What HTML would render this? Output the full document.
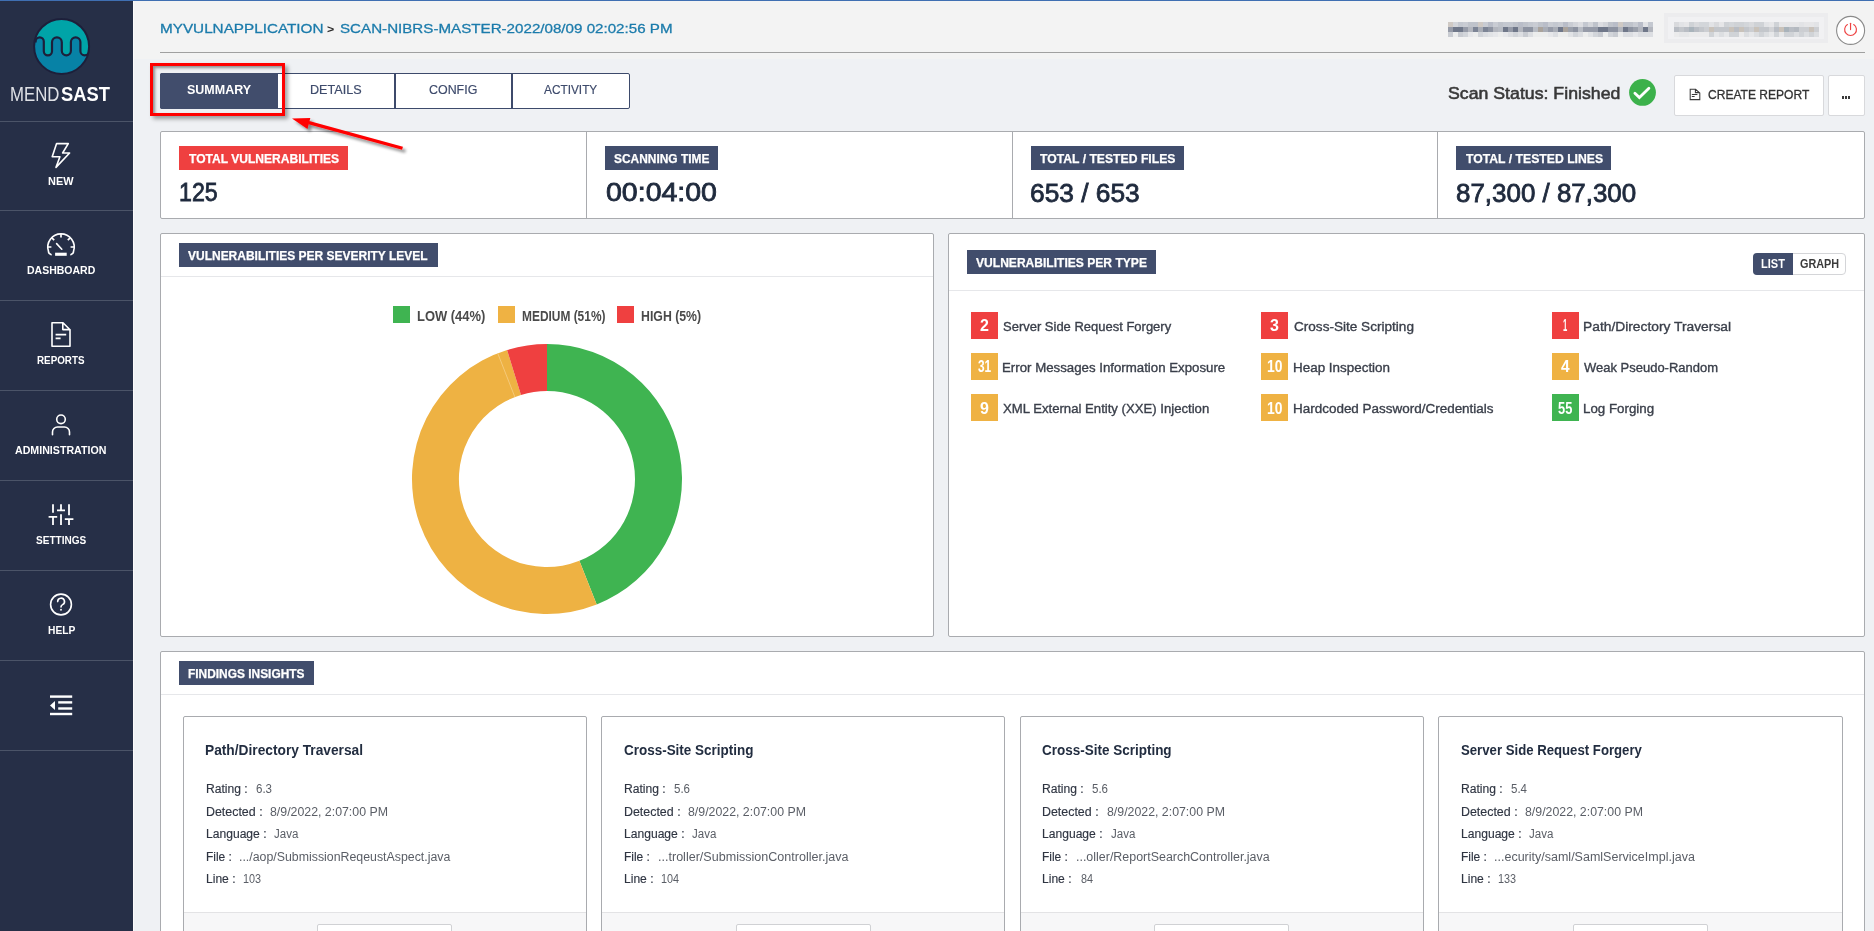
<!DOCTYPE html>
<html><head><meta charset="utf-8">
<style>
*{margin:0;padding:0;box-sizing:border-box}
html,body{width:1874px;height:931px;overflow:hidden;background:#eff1f4;font-family:"Liberation Sans",sans-serif}
.abs{position:absolute}
.t{position:absolute;white-space:nowrap;line-height:1;transform-origin:0 0}
.card{position:absolute;background:#fff;border:1px solid #a9abaf;border-radius:2px}
.sep{position:absolute;height:1px;background:#e6e7ea}
.lbl{position:absolute;height:24px;background:#414d6c}
.badge{position:absolute;width:27px;height:27px}
.sdiv{position:absolute;left:0;width:133px;height:1px;background:#4b5468}
</style></head><body>
<!-- top header bg -->
<div class="abs" style="left:133px;top:0;width:1741px;height:59px;background:#f3f3f3"></div>
<div class="abs" style="left:0;top:0;width:1874px;height:1px;background:#3f6fb2"></div>
<!-- sidebar -->
<div class="abs" style="left:0;top:1px;width:133px;height:930px;background:#262f47"></div>
<div class="abs" style="left:133px;top:1px;width:1px;height:930px;background:#fbfbfb"></div>
<div class="sdiv" style="top:121px"></div>
<div class="sdiv" style="top:210px"></div>
<div class="sdiv" style="top:300px"></div>
<div class="sdiv" style="top:390px"></div>
<div class="sdiv" style="top:480px"></div>
<div class="sdiv" style="top:570px"></div>
<div class="sdiv" style="top:660px"></div>
<div class="sdiv" style="top:750px"></div>

<svg class="abs" style="left:0;top:0" width="133" height="931" viewBox="0 0 133 931">
  <defs><clipPath id="lc"><circle cx="61.6" cy="46.4" r="27.6"/></clipPath></defs>
  <g clip-path="url(#lc)">
    <rect x="30" y="15" width="65" height="65" fill="#0782a6"/>
    <path d="M30 41.4 L35.6 41.4 A4.1 4.1 0 0 1 43.8 41.4 L43.8 51.2 A4.1 4.1 0 0 0 52 51.2 L52 42.2 A4.9 4.9 0 0 1 61.8 42.2 L61.8 50.75 A4.55 4.55 0 0 0 70.9 50.75 L70.9 42.05 A4.75 4.75 0 0 1 80.4 42.05 L80.4 51 A4.3 4.3 0 0 0 89 51 L95 51 L95 10 L30 10 Z" fill="#00a4a8"/>
    <path d="M30 41.4 L35.6 41.4 A4.1 4.1 0 0 1 43.8 41.4 L43.8 51.2 A4.1 4.1 0 0 0 52 51.2 L52 42.2 A4.9 4.9 0 0 1 61.8 42.2 L61.8 50.75 A4.55 4.55 0 0 0 70.9 50.75 L70.9 42.05 A4.75 4.75 0 0 1 80.4 42.05 L80.4 51 A4.3 4.3 0 0 0 89 51 L95 51" fill="none" stroke="#1d1f3a" stroke-width="2.2"/>
  </g>
  <circle cx="61.6" cy="46.4" r="27.5" fill="none" stroke="#1d1f3a" stroke-width="2"/>
  <g fill="none" stroke="#fff" stroke-width="1.6" stroke-linejoin="round" stroke-linecap="round">
    <!-- new -->
    <path d="M56.6 143.6 L68.3 143.6 L62.6 153 L69.6 153 L56 167.4 L59.9 156.8 L52.2 156.8 Z"/>
    <!-- dashboard -->
    <path d="M51 254.6 Q48.4 253.6 48.4 251 A13.2 13.2 0 1 1 73.6 251 Q73.6 253.6 71 254.6"/>
    <path d="M48.00 247.00 L51.40 247.00 M51.81 237.81 L54.21 240.21 M61.00 234.00 L61.00 237.40 M70.19 237.81 L67.79 240.21 M74.00 247.00 L70.60 247.00" stroke-width="1.7" stroke-linecap="butt"/>
    <path d="M56.6 243.6 L61.8 249.2" stroke-width="1.6"/>
    <!-- reports -->
    <path d="M52 322.8 L63 322.8 L70 329.8 L70 346.2 L52 346.2 Z M62.8 322.8 L62.8 329.6 L70 329.6"/>
    <path d="M55.6 334.6 L66.2 334.6 M55.6 338.4 L60.6 338.4" stroke-linecap="butt"/>
    <!-- admin -->
    <circle cx="61" cy="419.3" r="4.3"/>
    <path d="M52.5 434.8 L52.5 432 A5 5 0 0 1 57.5 427 L64.5 427 A5 5 0 0 1 69.5 432 L69.5 434.8"/>
    <!-- settings -->
    <path d="M53 504.2 L53 512.8 M48.6 516.8 L57.2 516.8 M53 516.8 L53 525 M61 504.2 L61 510.3 M57 510.3 L65 510.3 M61 514.2 L61 525 M69 504.2 L69 515.3 M64.8 519.2 L73.4 519.2 M69 519.2 L69 525" stroke-width="1.8" stroke-linecap="butt"/>
    <!-- help -->
    <circle cx="61" cy="604.5" r="10.4"/>
    <path d="M57.7 601.6 A3.4 3.4 0 1 1 62.6 604.6 Q61 605.4 61 607"/>
  </g>
  <circle cx="61" cy="609.8" r="0.95" fill="#fff"/>
  <g fill="#fff">
    <rect x="50" y="695.4" width="22.2" height="2.4"/>
    <rect x="58.2" y="701.2" width="14" height="2.4"/>
    <rect x="58.2" y="707.3" width="14" height="2.4"/>
    <rect x="50" y="712.8" width="22.2" height="2.4"/>
    <path d="M50 705.4 L55 700.9 L55 709.9 Z"/>
    <rect x="55.1" y="252.7" width="11.6" height="3.1"/>
  </g>
</svg>

<!-- header line -->
<div class="abs" style="left:160px;top:52px;width:1705px;height:1px;background:#a0a0a0"></div>
<svg class="abs" style="left:1448px;top:22px" width="205" height="15"><rect x="0" y="0" width="5" height="5" fill="#cfc9c4"/><rect x="5" y="0" width="5" height="5" fill="#d3d5da"/><rect x="10" y="0" width="5" height="5" fill="#c4c8d0"/><rect x="15" y="0" width="5" height="5" fill="#c9ccd3"/><rect x="20" y="0" width="5" height="5" fill="#bfc3cb"/><rect x="25" y="0" width="5" height="5" fill="#bfc3cb"/><rect x="30" y="0" width="5" height="5" fill="#cfc9c4"/><rect x="35" y="0" width="5" height="5" fill="#c9ccd3"/><rect x="40" y="0" width="5" height="5" fill="#b9bdc8"/><rect x="45" y="0" width="5" height="5" fill="#c9ccd3"/><rect x="50" y="0" width="5" height="5" fill="#bfc3cb"/><rect x="55" y="0" width="5" height="5" fill="#c4c8d0"/><rect x="60" y="0" width="5" height="5" fill="#c4c8d0"/><rect x="65" y="0" width="5" height="5" fill="#bfc3cb"/><rect x="70" y="0" width="5" height="5" fill="#b9bdc8"/><rect x="75" y="0" width="5" height="5" fill="#bfc3cb"/><rect x="80" y="0" width="5" height="5" fill="#c4c8d0"/><rect x="85" y="0" width="5" height="5" fill="#c9ccd3"/><rect x="90" y="0" width="5" height="5" fill="#bfc3cb"/><rect x="95" y="0" width="5" height="5" fill="#b9bdc8"/><rect x="100" y="0" width="5" height="5" fill="#c9ccd3"/><rect x="105" y="0" width="5" height="5" fill="#c4c8d0"/><rect x="110" y="0" width="5" height="5" fill="#c9ccd3"/><rect x="115" y="0" width="5" height="5" fill="#b9bdc8"/><rect x="120" y="0" width="5" height="5" fill="#c9ccd3"/><rect x="125" y="0" width="5" height="5" fill="#d3d5da"/><rect x="130" y="0" width="5" height="5" fill="#dcdde1"/><rect x="135" y="0" width="5" height="5" fill="#c4c8d0"/><rect x="140" y="0" width="5" height="5" fill="#d3d5da"/><rect x="145" y="0" width="5" height="5" fill="#bfc3cb"/><rect x="150" y="0" width="5" height="5" fill="#dcdde1"/><rect x="155" y="0" width="5" height="5" fill="#d3d5da"/><rect x="160" y="0" width="5" height="5" fill="#bfc3cb"/><rect x="165" y="0" width="5" height="5" fill="#b9bdc8"/><rect x="170" y="0" width="5" height="5" fill="#cfc9c4"/><rect x="175" y="0" width="5" height="5" fill="#bfc3cb"/><rect x="180" y="0" width="5" height="5" fill="#bfc3cb"/><rect x="185" y="0" width="5" height="5" fill="#c9ccd3"/><rect x="190" y="0" width="5" height="5" fill="#b9bdc8"/><rect x="195" y="0" width="5" height="5" fill="#e2e3e6"/><rect x="200" y="0" width="5" height="5" fill="#c4c8d0"/><rect x="0" y="5" width="5" height="5" fill="#969ba8"/><rect x="5" y="5" width="5" height="5" fill="#6f7789"/><rect x="10" y="5" width="5" height="5" fill="#6f7789"/><rect x="15" y="5" width="5" height="5" fill="#969ba8"/><rect x="20" y="5" width="5" height="5" fill="#b3b6be"/><rect x="25" y="5" width="5" height="5" fill="#7c8495"/><rect x="30" y="5" width="5" height="5" fill="#a9adb6"/><rect x="35" y="5" width="5" height="5" fill="#7c8495"/><rect x="40" y="5" width="5" height="5" fill="#8d93a1"/><rect x="45" y="5" width="5" height="5" fill="#b3b6be"/><rect x="50" y="5" width="5" height="5" fill="#b8bcc4"/><rect x="55" y="5" width="5" height="5" fill="#6f7789"/><rect x="60" y="5" width="5" height="5" fill="#969ba8"/><rect x="65" y="5" width="5" height="5" fill="#6f7789"/><rect x="70" y="5" width="5" height="5" fill="#b3b6be"/><rect x="75" y="5" width="5" height="5" fill="#8d93a1"/><rect x="80" y="5" width="5" height="5" fill="#8d93a1"/><rect x="85" y="5" width="5" height="5" fill="#b8bcc4"/><rect x="90" y="5" width="5" height="5" fill="#aaa39c"/><rect x="95" y="5" width="5" height="5" fill="#a9adb6"/><rect x="100" y="5" width="5" height="5" fill="#969ba8"/><rect x="105" y="5" width="5" height="5" fill="#a9adb6"/><rect x="110" y="5" width="5" height="5" fill="#6f7789"/><rect x="115" y="5" width="5" height="5" fill="#aaa39c"/><rect x="120" y="5" width="5" height="5" fill="#9ba0ab"/><rect x="125" y="5" width="5" height="5" fill="#8d93a1"/><rect x="130" y="5" width="5" height="5" fill="#b8bcc4"/><rect x="135" y="5" width="5" height="5" fill="#969ba8"/><rect x="140" y="5" width="5" height="5" fill="#969ba8"/><rect x="145" y="5" width="5" height="5" fill="#969ba8"/><rect x="150" y="5" width="5" height="5" fill="#6f7789"/><rect x="155" y="5" width="5" height="5" fill="#6f7789"/><rect x="160" y="5" width="5" height="5" fill="#8d93a1"/><rect x="165" y="5" width="5" height="5" fill="#8d93a1"/><rect x="170" y="5" width="5" height="5" fill="#b3b6be"/><rect x="175" y="5" width="5" height="5" fill="#6f7789"/><rect x="180" y="5" width="5" height="5" fill="#8d93a1"/><rect x="185" y="5" width="5" height="5" fill="#9ba0ab"/><rect x="190" y="5" width="5" height="5" fill="#b3b6be"/><rect x="195" y="5" width="5" height="5" fill="#6f7789"/><rect x="200" y="5" width="5" height="5" fill="#b3b6be"/><rect x="0" y="10" width="5" height="5" fill="#c9ccd2"/><rect x="5" y="10" width="5" height="5" fill="#eceded"/><rect x="10" y="10" width="5" height="5" fill="#c9ccd2"/><rect x="15" y="10" width="5" height="5" fill="#d2d5da"/><rect x="20" y="10" width="5" height="5" fill="#e6e7ea"/><rect x="25" y="10" width="5" height="5" fill="#eceded"/><rect x="30" y="10" width="5" height="5" fill="#d2d5da"/><rect x="35" y="10" width="5" height="5" fill="#dcdee2"/><rect x="40" y="10" width="5" height="5" fill="#e1e3e6"/><rect x="45" y="10" width="5" height="5" fill="#e6e7ea"/><rect x="50" y="10" width="5" height="5" fill="#eceded"/><rect x="55" y="10" width="5" height="5" fill="#e6e7ea"/><rect x="60" y="10" width="5" height="5" fill="#dcdee2"/><rect x="65" y="10" width="5" height="5" fill="#d2d5da"/><rect x="70" y="10" width="5" height="5" fill="#dcdee2"/><rect x="75" y="10" width="5" height="5" fill="#c9ccd2"/><rect x="80" y="10" width="5" height="5" fill="#dcdee2"/><rect x="85" y="10" width="5" height="5" fill="#eceded"/><rect x="90" y="10" width="5" height="5" fill="#eceded"/><rect x="95" y="10" width="5" height="5" fill="#eceded"/><rect x="100" y="10" width="5" height="5" fill="#e6e7ea"/><rect x="105" y="10" width="5" height="5" fill="#dcdee2"/><rect x="110" y="10" width="5" height="5" fill="#eceded"/><rect x="115" y="10" width="5" height="5" fill="#eceded"/><rect x="120" y="10" width="5" height="5" fill="#e1e3e6"/><rect x="125" y="10" width="5" height="5" fill="#d2d5da"/><rect x="130" y="10" width="5" height="5" fill="#dcdee2"/><rect x="135" y="10" width="5" height="5" fill="#eceded"/><rect x="140" y="10" width="5" height="5" fill="#e1e3e6"/><rect x="145" y="10" width="5" height="5" fill="#d2d5da"/><rect x="150" y="10" width="5" height="5" fill="#c9ccd2"/><rect x="155" y="10" width="5" height="5" fill="#eceded"/><rect x="160" y="10" width="5" height="5" fill="#d2d5da"/><rect x="165" y="10" width="5" height="5" fill="#c9ccd2"/><rect x="170" y="10" width="5" height="5" fill="#eceded"/><rect x="175" y="10" width="5" height="5" fill="#dcdee2"/><rect x="180" y="10" width="5" height="5" fill="#dcdee2"/><rect x="185" y="10" width="5" height="5" fill="#e6e7ea"/><rect x="190" y="10" width="5" height="5" fill="#dcdee2"/><rect x="195" y="10" width="5" height="5" fill="#dcdee2"/><rect x="200" y="10" width="5" height="5" fill="#dcdee2"/></svg>
<div class="abs" style="left:1664px;top:13px;width:164px;height:30px;background:#ececee"></div>
<div class="abs" style="left:1668px;top:17px;width:156px;height:22px;background:#f1f1f3"></div>
<svg class="abs" style="left:1674px;top:22px" width="145" height="15"><rect x="0" y="0" width="5" height="5" fill="#d9dadd"/><rect x="5" y="0" width="5" height="5" fill="#e2e3e6"/><rect x="10" y="0" width="5" height="5" fill="#e6e6e8"/><rect x="15" y="0" width="5" height="5" fill="#cfd2d6"/><rect x="20" y="0" width="5" height="5" fill="#d9dadd"/><rect x="25" y="0" width="5" height="5" fill="#d3d6da"/><rect x="30" y="0" width="5" height="5" fill="#d3d6da"/><rect x="35" y="0" width="5" height="5" fill="#e2e3e6"/><rect x="40" y="0" width="5" height="5" fill="#d9dadd"/><rect x="45" y="0" width="5" height="5" fill="#e6e6e8"/><rect x="50" y="0" width="5" height="5" fill="#cfd2d6"/><rect x="55" y="0" width="5" height="5" fill="#d3d6da"/><rect x="60" y="0" width="5" height="5" fill="#cfd2d6"/><rect x="65" y="0" width="5" height="5" fill="#cfd2d6"/><rect x="70" y="0" width="5" height="5" fill="#d3d6da"/><rect x="75" y="0" width="5" height="5" fill="#d9dadd"/><rect x="80" y="0" width="5" height="5" fill="#cfd2d6"/><rect x="85" y="0" width="5" height="5" fill="#cfd2d6"/><rect x="90" y="0" width="5" height="5" fill="#e2e3e6"/><rect x="95" y="0" width="5" height="5" fill="#e6e6e8"/><rect x="100" y="0" width="5" height="5" fill="#cfd2d6"/><rect x="105" y="0" width="5" height="5" fill="#e6e6e8"/><rect x="110" y="0" width="5" height="5" fill="#e6e6e8"/><rect x="115" y="0" width="5" height="5" fill="#e6e6e8"/><rect x="120" y="0" width="5" height="5" fill="#e6e6e8"/><rect x="125" y="0" width="5" height="5" fill="#e2e3e6"/><rect x="130" y="0" width="5" height="5" fill="#e6e6e8"/><rect x="135" y="0" width="5" height="5" fill="#e6e6e8"/><rect x="140" y="0" width="5" height="5" fill="#e2e3e6"/><rect x="0" y="5" width="5" height="5" fill="#b9bdc4"/><rect x="5" y="5" width="5" height="5" fill="#c3c6cb"/><rect x="10" y="5" width="5" height="5" fill="#b9bdc4"/><rect x="15" y="5" width="5" height="5" fill="#a9b3bb"/><rect x="20" y="5" width="5" height="5" fill="#b9bdc4"/><rect x="25" y="5" width="5" height="5" fill="#c3c6cb"/><rect x="30" y="5" width="5" height="5" fill="#ccced2"/><rect x="35" y="5" width="5" height="5" fill="#c9c2ba"/><rect x="40" y="5" width="5" height="5" fill="#c3c6cb"/><rect x="45" y="5" width="5" height="5" fill="#c3c6cb"/><rect x="50" y="5" width="5" height="5" fill="#c3c6cb"/><rect x="55" y="5" width="5" height="5" fill="#c9c2ba"/><rect x="60" y="5" width="5" height="5" fill="#b9bdc4"/><rect x="65" y="5" width="5" height="5" fill="#c9c2ba"/><rect x="70" y="5" width="5" height="5" fill="#c3c6cb"/><rect x="75" y="5" width="5" height="5" fill="#ccced2"/><rect x="80" y="5" width="5" height="5" fill="#c9c2ba"/><rect x="85" y="5" width="5" height="5" fill="#c3c6cb"/><rect x="90" y="5" width="5" height="5" fill="#c3c6cb"/><rect x="95" y="5" width="5" height="5" fill="#d2d3d6"/><rect x="100" y="5" width="5" height="5" fill="#b9bdc4"/><rect x="105" y="5" width="5" height="5" fill="#c9c2ba"/><rect x="110" y="5" width="5" height="5" fill="#a9b3bb"/><rect x="115" y="5" width="5" height="5" fill="#b9bdc4"/><rect x="120" y="5" width="5" height="5" fill="#b4b9c0"/><rect x="125" y="5" width="5" height="5" fill="#ccced2"/><rect x="130" y="5" width="5" height="5" fill="#ccced2"/><rect x="135" y="5" width="5" height="5" fill="#c9c2ba"/><rect x="140" y="5" width="5" height="5" fill="#ccced2"/><rect x="0" y="10" width="5" height="5" fill="#ebebec"/><rect x="5" y="10" width="5" height="5" fill="#e6e7e9"/><rect x="10" y="10" width="5" height="5" fill="#e6e7e9"/><rect x="15" y="10" width="5" height="5" fill="#ebebec"/><rect x="20" y="10" width="5" height="5" fill="#ebebec"/><rect x="25" y="10" width="5" height="5" fill="#ebebec"/><rect x="30" y="10" width="5" height="5" fill="#ebebec"/><rect x="35" y="10" width="5" height="5" fill="#d0d3d7"/><rect x="40" y="10" width="5" height="5" fill="#e6e7e9"/><rect x="45" y="10" width="5" height="5" fill="#dcdee1"/><rect x="50" y="10" width="5" height="5" fill="#e6e7e9"/><rect x="55" y="10" width="5" height="5" fill="#d0d3d7"/><rect x="60" y="10" width="5" height="5" fill="#d0d3d7"/><rect x="65" y="10" width="5" height="5" fill="#ebebec"/><rect x="70" y="10" width="5" height="5" fill="#dcdee1"/><rect x="75" y="10" width="5" height="5" fill="#e6e7e9"/><rect x="80" y="10" width="5" height="5" fill="#dcdee1"/><rect x="85" y="10" width="5" height="5" fill="#d0d3d7"/><rect x="90" y="10" width="5" height="5" fill="#dcdee1"/><rect x="95" y="10" width="5" height="5" fill="#e6e7e9"/><rect x="100" y="10" width="5" height="5" fill="#d0d3d7"/><rect x="105" y="10" width="5" height="5" fill="#e6e7e9"/><rect x="110" y="10" width="5" height="5" fill="#d0d3d7"/><rect x="115" y="10" width="5" height="5" fill="#d0d3d7"/><rect x="120" y="10" width="5" height="5" fill="#dcdee1"/><rect x="125" y="10" width="5" height="5" fill="#d0d3d7"/><rect x="130" y="10" width="5" height="5" fill="#dcdee1"/><rect x="135" y="10" width="5" height="5" fill="#d0d3d7"/><rect x="140" y="10" width="5" height="5" fill="#dcdee1"/></svg>
<svg class="abs" style="left:1834px;top:14px" width="33" height="33" viewBox="0 0 33 33">
  <circle cx="16.6" cy="16.4" r="14" fill="#ffffff" stroke="#8a8a8a" stroke-width="1.1"/>
  <path d="M13.4 10.6 A5.9 5.9 0 1 0 19.7 10.6" fill="none" stroke="#ee4444" stroke-width="1.15" stroke-linecap="round"/>
  <path d="M16.55 9.2 L16.55 15.6" fill="none" stroke="#ee4444" stroke-width="1.15" stroke-linecap="round"/>
</svg>

<!-- tabs -->
<div class="abs" style="left:160px;top:73px;width:470px;height:36px;border:1.5px solid #3d4a6b;border-radius:2px;background:#fff"></div>
<div class="abs" style="left:160px;top:73px;width:118px;height:36px;background:#414d6c;border-radius:2px 0 0 2px"></div>
<div class="abs" style="left:394px;top:73px;width:1.5px;height:36px;background:#3d4a6b"></div>
<div class="abs" style="left:511px;top:73px;width:1.5px;height:36px;background:#3d4a6b"></div>
<!-- red highlight -->
<div class="abs" style="left:150px;top:63px;width:135px;height:53px;border:3px solid #ff0000;box-shadow:3px 3px 4px rgba(0,0,0,0.35), inset 2px 2px 3px rgba(0,0,0,0.4)"></div>

<!-- status -->
<svg class="abs" style="left:1628px;top:78px" width="30" height="30" viewBox="0 0 30 30">
  <circle cx="14.5" cy="14.4" r="13.4" fill="#3cb14b"/>
  <path d="M6.9 15.2 L11.4 19.6 L20.9 10.3" fill="none" stroke="#fff" stroke-width="2.8" stroke-linecap="round" stroke-linejoin="miter"/>
</svg>
<div class="abs" style="left:1674px;top:75px;width:150px;height:41px;background:#fff;border:1px solid #d8d9dc;border-radius:2px"></div>
<div class="abs" style="left:1828px;top:75px;width:37px;height:41px;background:#fff;border:1px solid #d8d9dc;border-radius:2px"></div>
<div class="abs" style="left:1842px;top:96px;width:2px;height:3px;background:#3a3a3a"></div><div class="abs" style="left:1845px;top:96px;width:2px;height:3px;background:#3a3a3a"></div><div class="abs" style="left:1848px;top:96px;width:2px;height:3px;background:#3a3a3a"></div>
<svg class="abs" style="left:1688px;top:87px" width="14" height="15" viewBox="0 0 14 15">
  <path d="M2.2 2.3 L7.6 2.3 L11.8 6 L11.8 12.6 L2.2 12.6 Z M7.4 2.3 L7.4 5.6 L11.8 5.6 M3.8 7.4 L9.4 7.4 M3.8 9.4 L6.6 9.4" fill="none" stroke="#3a3a3a" stroke-width="1.05"/>
</svg>

<!-- stats card -->
<div class="card" style="left:160px;top:131px;width:1705px;height:88px"></div>
<div class="abs" style="left:586px;top:132px;width:1px;height:86px;background:#a9abaf"></div>
<div class="abs" style="left:1012px;top:132px;width:1px;height:86px;background:#a9abaf"></div>
<div class="abs" style="left:1437px;top:132px;width:1px;height:86px;background:#a9abaf"></div>
<div class="lbl" style="left:179px;top:146px;width:169px;background:#ef4040"></div>
<div class="lbl" style="left:605px;top:146px;width:113px"></div>
<div class="lbl" style="left:1031px;top:146px;width:153px"></div>
<div class="lbl" style="left:1456px;top:146px;width:155px"></div>

<!-- severity card -->
<div class="card" style="left:160px;top:233px;width:774px;height:404px"></div>
<div class="sep" style="left:161px;top:276px;width:772px"></div>
<div class="lbl" style="left:179px;top:243px;width:259px"></div>
<div class="abs" style="left:393px;top:306px;width:17px;height:17px;background:#3fb451"></div>
<div class="abs" style="left:498px;top:306px;width:17px;height:17px;background:#efb243"></div>
<div class="abs" style="left:617px;top:306px;width:17px;height:17px;background:#ef4040"></div>
<svg class="abs" style="left:0;top:0" width="1874" height="931"><path d="M547.00 344.00 A135.00 135.00 0 0 1 596.70 604.52 L579.39 560.82 A88.00 88.00 0 0 0 547.00 391.00 Z" fill="#3fb451"/><path d="M596.70 604.52 A135.00 135.00 0 1 1 507.08 350.04 L520.98 394.94 A88.00 88.00 0 1 0 579.39 560.82 Z" fill="#eeb243"/><path d="M507.08 350.04 A135.00 135.00 0 0 1 547.00 344.00 L547.00 391.00 A88.00 88.00 0 0 0 520.98 394.94 Z" fill="#ef4040"/><path d="M497.74 353.31 L514.89 397.07" stroke="#f6cf86" stroke-width="0.8"/></svg>

<!-- type card -->
<div class="card" style="left:948px;top:233px;width:917px;height:404px"></div>
<div class="sep" style="left:949px;top:290px;width:915px"></div>
<div class="lbl" style="left:967px;top:250px;width:189px"></div>
<div class="abs" style="left:1753px;top:253px;width:93px;height:22px;border:1px solid #d4d5d8;border-radius:4px;background:#fff"></div>
<div class="abs" style="left:1753px;top:253px;width:40px;height:22px;background:#414d6c;border-radius:4px 0 0 4px"></div>
<div class="badge" style="left:971.0px;top:312.0px;background:#ef4040"></div>
<div class="badge" style="left:1261.0px;top:312.0px;background:#ef4040"></div>
<div class="badge" style="left:1552.0px;top:312.0px;background:#ef4040"></div>
<div class="badge" style="left:971.0px;top:353.0px;background:#efb243"></div>
<div class="badge" style="left:1261.0px;top:353.0px;background:#efb243"></div>
<div class="badge" style="left:1552.0px;top:353.0px;background:#efb243"></div>
<div class="badge" style="left:971.0px;top:394.3px;background:#efb243"></div>
<div class="badge" style="left:1261.0px;top:394.3px;background:#efb243"></div>
<div class="badge" style="left:1552.0px;top:394.3px;background:#3fb451"></div>

<!-- findings -->
<div class="card" style="left:160px;top:651px;width:1705px;height:300px"></div>
<div class="sep" style="left:161px;top:694px;width:1703px"></div>
<div class="lbl" style="left:179px;top:661px;width:135px"></div>
<div class="card" style="left:183px;top:716px;width:404px;height:240px;border-radius:2px"></div>
<div class="card" style="left:601px;top:716px;width:404px;height:240px;border-radius:2px"></div>
<div class="card" style="left:1020px;top:716px;width:404px;height:240px;border-radius:2px"></div>
<div class="card" style="left:1438px;top:716px;width:405px;height:240px;border-radius:2px"></div>
<div class="abs" style="left:184px;top:912px;width:402px;height:20px;background:#f7f7f8;border-top:1px solid #e3e3e5"></div>
<div class="abs" style="left:602px;top:912px;width:402px;height:20px;background:#f7f7f8;border-top:1px solid #e3e3e5"></div>
<div class="abs" style="left:1021px;top:912px;width:402px;height:20px;background:#f7f7f8;border-top:1px solid #e3e3e5"></div>
<div class="abs" style="left:1439px;top:912px;width:403px;height:20px;background:#f7f7f8;border-top:1px solid #e3e3e5"></div>
<div class="abs" style="left:317px;top:924px;width:135px;height:20px;background:#fff;border:1px solid #d0d1d4;border-radius:2px"></div>
<div class="abs" style="left:736px;top:924px;width:135px;height:20px;background:#fff;border:1px solid #d0d1d4;border-radius:2px"></div>
<div class="abs" style="left:1154px;top:924px;width:135px;height:20px;background:#fff;border:1px solid #d0d1d4;border-radius:2px"></div>
<div class="abs" style="left:1573px;top:924px;width:135px;height:20px;background:#fff;border:1px solid #d0d1d4;border-radius:2px"></div>

<div class="t" style="left:48.20px;top:175.00px;font-size:11.63px;font-weight:700;color:#ffffff;transform:scaleX(0.9400)">NEW</div>
<div class="t" style="left:27.20px;top:264.00px;font-size:11.63px;font-weight:700;color:#ffffff;transform:scaleX(0.9031)">DASHBOARD</div>
<div class="t" style="left:37.30px;top:354.00px;font-size:11.63px;font-weight:700;color:#ffffff;transform:scaleX(0.8461)">REPORTS</div>
<div class="t" style="left:15.30px;top:444.00px;font-size:11.63px;font-weight:700;color:#ffffff;transform:scaleX(0.9148)">ADMINISTRATION</div>
<div class="t" style="left:35.80px;top:534.00px;font-size:11.63px;font-weight:700;color:#ffffff;transform:scaleX(0.8644)">SETTINGS</div>
<div class="t" style="left:47.80px;top:624.00px;font-size:11.63px;font-weight:700;color:#ffffff;transform:scaleX(0.8809)">HELP</div>
<div class="t" style="left:10.33px;top:85.00px;font-size:19.33px;font-weight:400;color:#dfe1e6;transform:scaleX(0.8686)">MEND</div>
<div class="t" style="left:61.20px;top:85.00px;font-size:19.33px;font-weight:700;color:#ffffff;transform:scaleX(0.9489)">SAST</div>
<div class="t" style="left:159.58px;top:22.00px;font-size:13.58px;font-weight:400;color:#1b7bab;transform:scaleX(1.1248);-webkit-text-stroke:0.30px #1b7bab">MYVULNAPPLICATION</div>
<div class="t" style="left:327.20px;top:24.00px;font-size:10.76px;font-weight:700;color:#2b2b2b;transform:scaleX(1.1500)">&gt;</div>
<div class="t" style="left:339.60px;top:22.00px;font-size:13.58px;font-weight:400;color:#1b7bab;transform:scaleX(1.1155);-webkit-text-stroke:0.30px #1b7bab">SCAN-NIBRS-MASTER-2022/08/09 02:02:56 PM</div>
<div class="t" style="left:186.80px;top:84.00px;font-size:12.94px;font-weight:700;color:#ffffff;transform:scaleX(0.9661)">SUMMARY</div>
<div class="t" style="left:309.90px;top:84.00px;font-size:12.62px;font-weight:400;color:#3d4a6b;transform:scaleX(0.9998);-webkit-text-stroke:0.18px #3d4a6b">DETAILS</div>
<div class="t" style="left:429.30px;top:84.00px;font-size:12.62px;font-weight:400;color:#3d4a6b;transform:scaleX(0.9850);-webkit-text-stroke:0.18px #3d4a6b">CONFIG</div>
<div class="t" style="left:543.50px;top:84.00px;font-size:12.62px;font-weight:400;color:#3d4a6b;transform:scaleX(0.9383);-webkit-text-stroke:0.18px #3d4a6b">ACTIVITY</div>
<div class="t" style="left:1448.00px;top:86.00px;font-size:16.77px;font-weight:400;color:#383838;transform:scaleX(1.0567);-webkit-text-stroke:0.55px #383838">Scan Status: Finished</div>
<div class="t" style="left:1708.00px;top:88.00px;font-size:12.99px;font-weight:400;color:#333333;transform:scaleX(0.9272);-webkit-text-stroke:0.30px #333333">CREATE REPORT</div>
<div class="t" style="left:188.50px;top:153.00px;font-size:12.35px;font-weight:700;color:#ffffff;transform:scaleX(0.9772);-webkit-text-stroke:0.25px #ffffff">TOTAL VULNERABILITIES</div>
<div class="t" style="left:613.60px;top:153.00px;font-size:12.35px;font-weight:700;color:#ffffff;transform:scaleX(0.9663);-webkit-text-stroke:0.25px #ffffff">SCANNING TIME</div>
<div class="t" style="left:1040.00px;top:153.00px;font-size:12.35px;font-weight:700;color:#ffffff;transform:scaleX(0.9872);-webkit-text-stroke:0.25px #ffffff">TOTAL / TESTED FILES</div>
<div class="t" style="left:1465.50px;top:153.00px;font-size:12.35px;font-weight:700;color:#ffffff;transform:scaleX(0.9897);-webkit-text-stroke:0.25px #ffffff">TOTAL / TESTED LINES</div>
<div class="t" style="left:179.07px;top:180.00px;font-size:25.06px;font-weight:400;color:#1f2a3d;transform:scaleX(0.9257);-webkit-text-stroke:0.80px #1f2a3d">125</div>
<div class="t" style="left:605.60px;top:180.00px;font-size:25.06px;font-weight:400;color:#1f2a3d;transform:scaleX(1.1381);-webkit-text-stroke:0.80px #1f2a3d">00:04:00</div>
<div class="t" style="left:1029.75px;top:181.00px;font-size:25.06px;font-weight:400;color:#1f2a3d;transform:scaleX(1.0505);-webkit-text-stroke:0.80px #1f2a3d">653 / 653</div>
<div class="t" style="left:1455.56px;top:181.00px;font-size:25.06px;font-weight:400;color:#1f2a3d;transform:scaleX(1.0351);-webkit-text-stroke:0.80px #1f2a3d">87,300 / 87,300</div>
<div class="t" style="left:188.30px;top:250.00px;font-size:12.35px;font-weight:700;color:#ffffff;transform:scaleX(0.9710);-webkit-text-stroke:0.25px #ffffff">VULNERABILITIES PER SEVERITY LEVEL</div>
<div class="t" style="left:417.20px;top:310.00px;font-size:13.95px;font-weight:700;color:#4a4a4a;transform:scaleX(0.9284)">LOW (44%)</div>
<div class="t" style="left:521.60px;top:310.00px;font-size:13.95px;font-weight:700;color:#4a4a4a;transform:scaleX(0.8553)">MEDIUM (51%)</div>
<div class="t" style="left:641.30px;top:310.00px;font-size:13.95px;font-weight:700;color:#4a4a4a;transform:scaleX(0.8829)">HIGH (5%)</div>
<div class="t" style="left:976.30px;top:257.00px;font-size:12.35px;font-weight:700;color:#ffffff;transform:scaleX(0.9773);-webkit-text-stroke:0.25px #ffffff">VULNERABILITIES PER TYPE</div>
<div class="t" style="left:1761.00px;top:257.00px;font-size:13.52px;font-weight:700;color:#ffffff;transform:scaleX(0.8166)">LIST</div>
<div class="t" style="left:1800.00px;top:257.00px;font-size:13.52px;font-weight:700;color:#3a3a3a;transform:scaleX(0.8020)">GRAPH</div>
<div class="t" style="left:980.30px;top:317.00px;font-size:17.15px;font-weight:700;color:#ffffff;transform:scaleX(0.9333)">2</div>
<div class="t" style="left:1003.30px;top:321.00px;font-size:12.91px;font-weight:400;color:#3a3f4a;transform:scaleX(1.0060);-webkit-text-stroke:0.35px #3a3f4a">Server Side Request Forgery</div>
<div class="t" style="left:1270.30px;top:317.00px;font-size:17.15px;font-weight:700;color:#ffffff;transform:scaleX(0.9333)">3</div>
<div class="t" style="left:1293.90px;top:321.00px;font-size:12.91px;font-weight:400;color:#3a3f4a;transform:scaleX(1.0516);-webkit-text-stroke:0.35px #3a3f4a">Cross-Site Scripting</div>
<div class="t" style="left:1563.06px;top:317.00px;font-size:17.15px;font-weight:700;color:#ffffff;transform:scaleX(0.4444)">1</div>
<div class="t" style="left:1583.33px;top:321.00px;font-size:12.91px;font-weight:400;color:#3a3f4a;transform:scaleX(1.0693);-webkit-text-stroke:0.35px #3a3f4a">Path/Directory Traversal</div>
<div class="t" style="left:977.75px;top:358.00px;font-size:17.15px;font-weight:700;color:#ffffff;transform:scaleX(0.6911)">31</div>
<div class="t" style="left:1002.27px;top:362.00px;font-size:12.91px;font-weight:400;color:#3a3f4a;transform:scaleX(1.0268);-webkit-text-stroke:0.35px #3a3f4a">Error Messages Information Exposure</div>
<div class="t" style="left:1266.59px;top:358.00px;font-size:17.15px;font-weight:700;color:#ffffff;transform:scaleX(0.8099)">10</div>
<div class="t" style="left:1292.86px;top:362.00px;font-size:12.91px;font-weight:400;color:#3a3f4a;transform:scaleX(1.0403);-webkit-text-stroke:0.35px #3a3f4a">Heap Inspection</div>
<div class="t" style="left:1561.00px;top:358.00px;font-size:17.15px;font-weight:700;color:#ffffff;transform:scaleX(0.9000)">4</div>
<div class="t" style="left:1584.40px;top:362.00px;font-size:12.91px;font-weight:400;color:#3a3f4a;transform:scaleX(1.0061);-webkit-text-stroke:0.35px #3a3f4a">Weak Pseudo-Random</div>
<div class="t" style="left:980.30px;top:400.00px;font-size:17.15px;font-weight:700;color:#ffffff;transform:scaleX(0.9333)">9</div>
<div class="t" style="left:1003.30px;top:403.00px;font-size:12.91px;font-weight:400;color:#3a3f4a;transform:scaleX(1.0184);-webkit-text-stroke:0.35px #3a3f4a">XML External Entity (XXE) Injection</div>
<div class="t" style="left:1266.59px;top:400.00px;font-size:17.15px;font-weight:700;color:#ffffff;transform:scaleX(0.8099)">10</div>
<div class="t" style="left:1292.86px;top:403.00px;font-size:12.91px;font-weight:400;color:#3a3f4a;transform:scaleX(1.0431);-webkit-text-stroke:0.35px #3a3f4a">Hardcoded Password/Credentials</div>
<div class="t" style="left:1558.20px;top:400.00px;font-size:17.15px;font-weight:700;color:#ffffff;transform:scaleX(0.7475)">55</div>
<div class="t" style="left:1583.37px;top:403.00px;font-size:12.91px;font-weight:400;color:#3a3f4a;transform:scaleX(1.0321);-webkit-text-stroke:0.35px #3a3f4a">Log Forging</div>
<div class="t" style="left:188.20px;top:668.00px;font-size:12.35px;font-weight:700;color:#ffffff;transform:scaleX(0.9654);-webkit-text-stroke:0.25px #ffffff">FINDINGS INSIGHTS</div>
<div class="t" style="left:204.79px;top:742.00px;font-size:15.12px;font-weight:700;color:#222d40;transform:scaleX(0.9088)">Path/Directory Traversal</div>
<div class="t" style="left:205.66px;top:783.00px;font-size:12.82px;font-weight:400;color:#2f3542;transform:scaleX(0.9449);-webkit-text-stroke:0.15px #2f3542">Rating :</div>
<div class="t" style="left:255.70px;top:782.00px;font-size:13.08px;font-weight:400;color:#5a5e66;transform:scaleX(0.8823)">6.3</div>
<div class="t" style="left:205.63px;top:806.00px;font-size:12.82px;font-weight:400;color:#2f3542;transform:scaleX(0.9688);-webkit-text-stroke:0.15px #2f3542">Detected :</div>
<div class="t" style="left:270.20px;top:805.00px;font-size:13.08px;font-weight:400;color:#5a5e66;transform:scaleX(0.9431)">8/9/2022, 2:07:00 PM</div>
<div class="t" style="left:205.66px;top:828.00px;font-size:12.82px;font-weight:400;color:#2f3542;transform:scaleX(0.9441);-webkit-text-stroke:0.15px #2f3542">Language :</div>
<div class="t" style="left:274.00px;top:827.00px;font-size:13.08px;font-weight:400;color:#5a5e66;transform:scaleX(0.8818)">Java</div>
<div class="t" style="left:205.67px;top:851.00px;font-size:12.82px;font-weight:400;color:#2f3542;transform:scaleX(0.9322);-webkit-text-stroke:0.15px #2f3542">File :</div>
<div class="t" style="left:239.46px;top:850.00px;font-size:13.08px;font-weight:400;color:#5a5e66;transform:scaleX(0.9440)">.../aop/SubmissionReqeustAspect.java</div>
<div class="t" style="left:205.66px;top:873.00px;font-size:12.82px;font-weight:400;color:#2f3542;transform:scaleX(0.9412);-webkit-text-stroke:0.15px #2f3542">Line :</div>
<div class="t" style="left:243.17px;top:872.00px;font-size:13.08px;font-weight:400;color:#5a5e66;transform:scaleX(0.8274)">103</div>
<div class="t" style="left:623.80px;top:742.00px;font-size:15.12px;font-weight:700;color:#222d40;transform:scaleX(0.8909)">Cross-Site Scripting</div>
<div class="t" style="left:623.76px;top:783.00px;font-size:12.82px;font-weight:400;color:#2f3542;transform:scaleX(0.9449);-webkit-text-stroke:0.15px #2f3542">Rating :</div>
<div class="t" style="left:673.80px;top:782.00px;font-size:13.08px;font-weight:400;color:#5a5e66;transform:scaleX(0.8823)">5.6</div>
<div class="t" style="left:623.73px;top:806.00px;font-size:12.82px;font-weight:400;color:#2f3542;transform:scaleX(0.9688);-webkit-text-stroke:0.15px #2f3542">Detected :</div>
<div class="t" style="left:688.30px;top:805.00px;font-size:13.08px;font-weight:400;color:#5a5e66;transform:scaleX(0.9431)">8/9/2022, 2:07:00 PM</div>
<div class="t" style="left:623.76px;top:828.00px;font-size:12.82px;font-weight:400;color:#2f3542;transform:scaleX(0.9441);-webkit-text-stroke:0.15px #2f3542">Language :</div>
<div class="t" style="left:692.10px;top:827.00px;font-size:13.08px;font-weight:400;color:#5a5e66;transform:scaleX(0.8818)">Java</div>
<div class="t" style="left:623.77px;top:851.00px;font-size:12.82px;font-weight:400;color:#2f3542;transform:scaleX(0.9322);-webkit-text-stroke:0.15px #2f3542">File :</div>
<div class="t" style="left:657.54px;top:850.00px;font-size:13.08px;font-weight:400;color:#5a5e66;transform:scaleX(0.9598)">...troller/SubmissionController.java</div>
<div class="t" style="left:623.76px;top:873.00px;font-size:12.82px;font-weight:400;color:#2f3542;transform:scaleX(0.9412);-webkit-text-stroke:0.15px #2f3542">Line :</div>
<div class="t" style="left:661.27px;top:872.00px;font-size:13.08px;font-weight:400;color:#5a5e66;transform:scaleX(0.8274)">104</div>
<div class="t" style="left:1042.40px;top:742.00px;font-size:15.12px;font-weight:700;color:#222d40;transform:scaleX(0.8923)">Cross-Site Scripting</div>
<div class="t" style="left:1042.36px;top:783.00px;font-size:12.82px;font-weight:400;color:#2f3542;transform:scaleX(0.9449);-webkit-text-stroke:0.15px #2f3542">Rating :</div>
<div class="t" style="left:1092.40px;top:782.00px;font-size:13.08px;font-weight:400;color:#5a5e66;transform:scaleX(0.8823)">5.6</div>
<div class="t" style="left:1042.33px;top:806.00px;font-size:12.82px;font-weight:400;color:#2f3542;transform:scaleX(0.9688);-webkit-text-stroke:0.15px #2f3542">Detected :</div>
<div class="t" style="left:1106.90px;top:805.00px;font-size:13.08px;font-weight:400;color:#5a5e66;transform:scaleX(0.9431)">8/9/2022, 2:07:00 PM</div>
<div class="t" style="left:1042.36px;top:828.00px;font-size:12.82px;font-weight:400;color:#2f3542;transform:scaleX(0.9441);-webkit-text-stroke:0.15px #2f3542">Language :</div>
<div class="t" style="left:1110.70px;top:827.00px;font-size:13.08px;font-weight:400;color:#5a5e66;transform:scaleX(0.8818)">Java</div>
<div class="t" style="left:1042.37px;top:851.00px;font-size:12.82px;font-weight:400;color:#2f3542;transform:scaleX(0.9322);-webkit-text-stroke:0.15px #2f3542">File :</div>
<div class="t" style="left:1076.15px;top:850.00px;font-size:13.08px;font-weight:400;color:#5a5e66;transform:scaleX(0.9515)">...oller/ReportSearchController.java</div>
<div class="t" style="left:1042.36px;top:873.00px;font-size:12.82px;font-weight:400;color:#2f3542;transform:scaleX(0.9412);-webkit-text-stroke:0.15px #2f3542">Line :</div>
<div class="t" style="left:1080.70px;top:872.00px;font-size:13.08px;font-weight:400;color:#5a5e66;transform:scaleX(0.8267)">84</div>
<div class="t" style="left:1460.70px;top:742.00px;font-size:15.12px;font-weight:700;color:#222d40;transform:scaleX(0.8721)">Server Side Request Forgery</div>
<div class="t" style="left:1460.66px;top:783.00px;font-size:12.82px;font-weight:400;color:#2f3542;transform:scaleX(0.9449);-webkit-text-stroke:0.15px #2f3542">Rating :</div>
<div class="t" style="left:1510.70px;top:782.00px;font-size:13.08px;font-weight:400;color:#5a5e66;transform:scaleX(0.8823)">5.4</div>
<div class="t" style="left:1460.63px;top:806.00px;font-size:12.82px;font-weight:400;color:#2f3542;transform:scaleX(0.9688);-webkit-text-stroke:0.15px #2f3542">Detected :</div>
<div class="t" style="left:1525.20px;top:805.00px;font-size:13.08px;font-weight:400;color:#5a5e66;transform:scaleX(0.9431)">8/9/2022, 2:07:00 PM</div>
<div class="t" style="left:1460.66px;top:828.00px;font-size:12.82px;font-weight:400;color:#2f3542;transform:scaleX(0.9441);-webkit-text-stroke:0.15px #2f3542">Language :</div>
<div class="t" style="left:1529.00px;top:827.00px;font-size:13.08px;font-weight:400;color:#5a5e66;transform:scaleX(0.8818)">Java</div>
<div class="t" style="left:1460.67px;top:851.00px;font-size:12.82px;font-weight:400;color:#2f3542;transform:scaleX(0.9322);-webkit-text-stroke:0.15px #2f3542">File :</div>
<div class="t" style="left:1494.44px;top:850.00px;font-size:13.08px;font-weight:400;color:#5a5e66;transform:scaleX(0.9563)">...ecurity/saml/SamlServiceImpl.java</div>
<div class="t" style="left:1460.66px;top:873.00px;font-size:12.82px;font-weight:400;color:#2f3542;transform:scaleX(0.9412);-webkit-text-stroke:0.15px #2f3542">Line :</div>
<div class="t" style="left:1498.17px;top:872.00px;font-size:13.08px;font-weight:400;color:#5a5e66;transform:scaleX(0.8274)">133</div>

<!-- arrow -->
<svg class="abs" style="left:280px;top:105px;overflow:visible" width="140" height="60" viewBox="280 105 140 60">
  <defs><filter id="ds" x="-20%" y="-50%" width="140%" height="200%"><feGaussianBlur in="SourceAlpha" stdDeviation="1.5"/><feOffset dx="2.5" dy="3" result="o"/><feComponentTransfer><feFuncA type="linear" slope="0.45"/></feComponentTransfer><feMerge><feMergeNode/><feMergeNode in="SourceGraphic"/></feMerge></filter></defs>
  <g filter="url(#ds)">
    <path d="M402.5 148.3 L308.8 122.6" stroke="#ff0000" stroke-width="3.2" stroke-linecap="butt"/>
    <path d="M292 118.4 L310.3 118 L307.5 129 Z" fill="#ff0000"/>
  </g>
</svg>
</body></html>
